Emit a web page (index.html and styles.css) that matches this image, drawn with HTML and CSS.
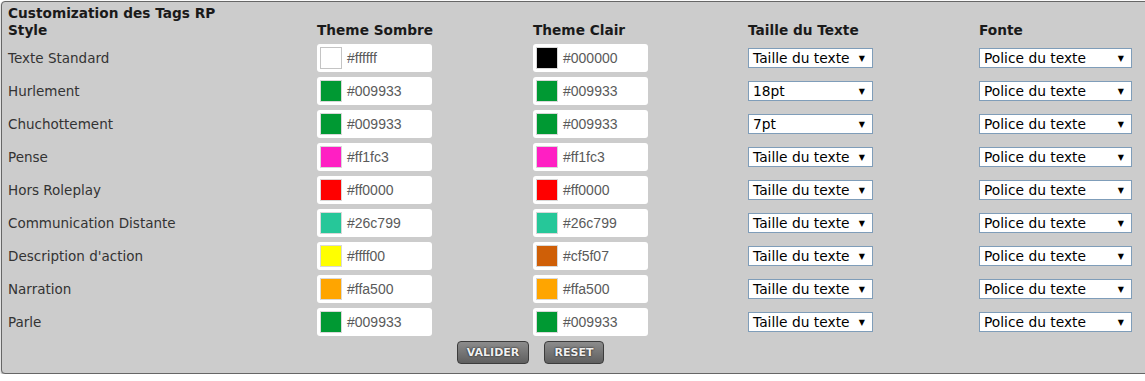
FILE: index.html
```html
<!DOCTYPE html>
<html lang="fr">
<head>
    <meta charset="UTF-8">
    <title>Customization des Tags RP</title>
    <link rel="stylesheet" href="styles.css">
</head>
<body>
<div class="panel">
    <div class="title">Customization des Tags RP</div>
    <div class="grid">
        <div class="head">Style</div>
        <div class="head">Theme Sombre</div>
        <div class="head">Theme Clair</div>
        <div class="head">Taille du Texte</div>
        <div class="head">Fonte</div>

        <div class="label">Texte Standard</div>
        <div class="color"><span class="swatch light" style="background:#ffffff"></span>#ffffff</div>
        <div class="color"><span class="swatch" style="background:#000000"></span>#000000</div>
        <div class="sel size">Taille du texte<span class="arrow">&#9660;</span></div>
        <div class="sel font">Police du texte<span class="arrow">&#9660;</span></div>

        <div class="label">Hurlement</div>
        <div class="color"><span class="swatch" style="background:#009933"></span>#009933</div>
        <div class="color"><span class="swatch" style="background:#009933"></span>#009933</div>
        <div class="sel size">18pt<span class="arrow">&#9660;</span></div>
        <div class="sel font">Police du texte<span class="arrow">&#9660;</span></div>

        <div class="label">Chuchottement</div>
        <div class="color"><span class="swatch" style="background:#009933"></span>#009933</div>
        <div class="color"><span class="swatch" style="background:#009933"></span>#009933</div>
        <div class="sel size">7pt<span class="arrow">&#9660;</span></div>
        <div class="sel font">Police du texte<span class="arrow">&#9660;</span></div>

        <div class="label">Pense</div>
        <div class="color"><span class="swatch" style="background:#ff1fc3"></span>#ff1fc3</div>
        <div class="color"><span class="swatch" style="background:#ff1fc3"></span>#ff1fc3</div>
        <div class="sel size">Taille du texte<span class="arrow">&#9660;</span></div>
        <div class="sel font">Police du texte<span class="arrow">&#9660;</span></div>

        <div class="label">Hors Roleplay</div>
        <div class="color"><span class="swatch" style="background:#ff0000"></span>#ff0000</div>
        <div class="color"><span class="swatch" style="background:#ff0000"></span>#ff0000</div>
        <div class="sel size">Taille du texte<span class="arrow">&#9660;</span></div>
        <div class="sel font">Police du texte<span class="arrow">&#9660;</span></div>

        <div class="label">Communication Distante</div>
        <div class="color"><span class="swatch" style="background:#26c799"></span>#26c799</div>
        <div class="color"><span class="swatch" style="background:#26c799"></span>#26c799</div>
        <div class="sel size">Taille du texte<span class="arrow">&#9660;</span></div>
        <div class="sel font">Police du texte<span class="arrow">&#9660;</span></div>

        <div class="label">Description d'action</div>
        <div class="color"><span class="swatch" style="background:#ffff00"></span>#ffff00</div>
        <div class="color"><span class="swatch" style="background:#cf5f07"></span>#cf5f07</div>
        <div class="sel size">Taille du texte<span class="arrow">&#9660;</span></div>
        <div class="sel font">Police du texte<span class="arrow">&#9660;</span></div>

        <div class="label">Narration</div>
        <div class="color"><span class="swatch" style="background:#ffa500"></span>#ffa500</div>
        <div class="color"><span class="swatch" style="background:#ffa500"></span>#ffa500</div>
        <div class="sel size">Taille du texte<span class="arrow">&#9660;</span></div>
        <div class="sel font">Police du texte<span class="arrow">&#9660;</span></div>

        <div class="label">Parle</div>
        <div class="color"><span class="swatch" style="background:#009933"></span>#009933</div>
        <div class="color"><span class="swatch" style="background:#009933"></span>#009933</div>
        <div class="sel size">Taille du texte<span class="arrow">&#9660;</span></div>
        <div class="sel font">Police du texte<span class="arrow">&#9660;</span></div>
    </div>
    <div class="buttons">
        <button class="btn valider">VALIDER</button>
        <button class="btn reset">RESET</button>
    </div>
</div>
</body>
</html>
```

FILE: styles.css
```css
body{
    margin: 0;
    background: #ffffff;
    font-family: "DejaVu Sans", Verdana, sans-serif;
}
.panel{
    margin: 1px 0 0 1px;
    width: 1160px;
    height: 373px;
    box-sizing: border-box;
    background-color: #cccccc;
    border: 1px solid #666666;
    border-radius: 4px;
    box-shadow: 0 1px 2px #999999;
    padding: 3px 0 0 6px;
}
.title{
    font-size: 13.7px;
    font-weight: bold;
    color: #1a1a1a;
    line-height: 17px;
}
.grid{
    display: grid;
    grid-template-columns: 309px 216px 215px 231px 1fr;
    grid-template-rows: 17px;
    grid-auto-rows: 28px;
    row-gap: 5px;
    align-items: center;
}
.grid .head{
    font-size: 13.7px;
    font-weight: bold;
    color: #1a1a1a;
    align-self: start;
    line-height: 17px;
}
.label{
    font-size: 13.5px;
    color: #333333;
}
.color{
    width: 115px;
    height: 28px;
    box-sizing: border-box;
    background: #ffffff;
    border-radius: 3px;
    display: flex;
    align-items: center;
    gap: 5px;
    padding-left: 3px;
    font-family: "Liberation Sans", Arial, sans-serif;
    font-size: 14px;
    color: #5a5a5a;
}
.swatch{
    width: 22px;
    height: 22px;
    box-sizing: border-box;
    border: 1px solid #d8d8d8;
}
.swatch.light{
    border-color: #c4c4c4;
}
.sel{
    height: 20px;
    box-sizing: border-box;
    background: #ffffff;
    border: 1px solid #7f9db9;
    display: flex;
    align-items: center;
    justify-content: space-between;
    padding: 0 7px 0 4px;
    font-size: 13.8px;
    color: #000000;
}
.sel.size{
    width: 125px;
}
.sel.font{
    width: 153px;
}
.arrow{
    font-size: 8px;
}
.buttons{
    display: flex;
    gap: 15px;
    padding: 5px 0 0 449px;
}
.btn{
    height: 23px;
    padding: 0;
    border: 1px solid #3c3c3c;
    border-radius: 4px;
    background: linear-gradient(#8c8c8c, #5f5f5f);
    color: #f0f0f0;
    font-family: "DejaVu Sans", Verdana, sans-serif;
    font-size: 11px;
    font-weight: bold;
    text-shadow: 0 0 2px #000000;
}
.btn.valider{
    width: 72px;
}
.btn.reset{
    width: 60px;
}
```
